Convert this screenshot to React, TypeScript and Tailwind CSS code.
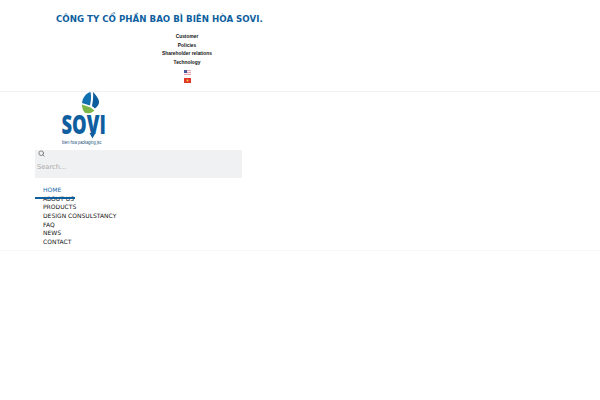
import React from 'react';
import { Search } from 'lucide-react';

const topLinks = ['Customer', 'Policies', 'Shareholder relations', 'Technology'];
const menu = ['HOME', 'ABOUT US', 'PRODUCTS', 'DESIGN CONSULSTANCY', 'FAQ', 'NEWS', 'CONTACT'];

const SoviLogo = () => (
  <svg width="46" height="56" viewBox="0 0 46 56">
    {/* leaf mark */}
    <path d="M30.5 0 C26 1 22.5 6 22 11 L30 13.5 C31 9 31.5 4 30.5 0 Z" fill="#1170b0" />
    <path d="M33 0 C37 4 39.5 8 39 11 C38.5 13 37 15 35 16.5 L32 14 C33 9 33.5 4 33 0 Z" fill="#0d5c9e" />
    <path d="M22 12.5 L30.5 15.5 L34.5 18.5 C31 21.5 27 22 24.5 20.5 C22.5 18 22 15 22 12.5 Z" fill="#7ab648" />
    <text transform="translate(1.5 42) scale(0.68 1)" fontFamily="'Open Sans', sans-serif" fontSize="27" fontWeight="800" fill="#0f5fa0">SOVI</text>
    <path d="M29.5 41 L35.5 41 L32.5 46.5 Z" fill="#0f5fa0" />
    <text transform="translate(2 52) scale(0.83 1)" fontFamily="'Liberation Sans', sans-serif" fontSize="4.7" fill="#1a4f80">bien hoa packaging jsc</text>
  </svg>
);

export default function App() {
  return (
    <div className="min-h-[400px] bg-white font-['DejaVu_Sans',sans-serif]">
      {/* Top bar */}
      <div className="h-[92px] border-b border-[#f0f0f0] pt-[13px]">
        <h1 className="pl-[56px] text-[8.67px] leading-[12px] font-bold text-[#0f5f9f]">
          CÔNG TY CỔ PHẦN BAO BÌ BIÊN HÒA SOVI.
        </h1>
        <ul className="mt-[8px] w-[374px] text-center font-['Liberation_Sans',sans-serif] text-[4.85px] leading-[8.67px] font-bold text-[#111111]">
          {topLinks.map((item) => (
            <li key={item}>{item}</li>
          ))}
          <li className="flex h-[8.67px] items-center justify-center">
            <svg width="7" height="5" viewBox="0 0 7 5">
              <rect width="7" height="5" fill="#e8a5ad" />
              <rect y="1" width="7" height="1" fill="#f5f0f2" />
              <rect y="3" width="7" height="1" fill="#f5f0f2" />
              <rect width="3" height="3" fill="#4a5a9c" />
            </svg>
          </li>
          <li className="flex h-[8.67px] items-center justify-center">
            <svg width="7" height="5" viewBox="0 0 7 5">
              <rect width="7" height="5" fill="#e0352b" />
              <circle cx="3.5" cy="2.5" r="1" fill="#fbd23c" />
            </svg>
          </li>
        </ul>
      </div>

      {/* Logo, search, menu */}
      <div className="h-[159px] border-b border-[#f7f7f7] pl-[35px]">
        <div className="pl-[25px]">
          <SoviLogo />
        </div>
        <div className="mt-[2px] h-[28px] w-[207px] bg-[#f0f1f2] pl-[2px]">
          <Search size={7} strokeWidth={3} className="mt-[2px] ml-px text-[#777777]" />
          <div className="mt-[5px] text-[6.67px] leading-[10px] text-[#a8a8a8]">Search...</div>
        </div>
        <nav className="relative mt-[8px] pl-[8px] text-[6px] leading-[8.67px] text-[#111111]">
          {menu.map((item, i) => (
            <div key={item} className={i === 0 ? 'text-[#1a6aa8]' : ''}>
              {item}
            </div>
          ))}
          <div className="absolute top-[11px] left-0 h-[2px] w-[40px] bg-[#0f5f9f]" />
        </nav>
      </div>
    </div>
  );
}
